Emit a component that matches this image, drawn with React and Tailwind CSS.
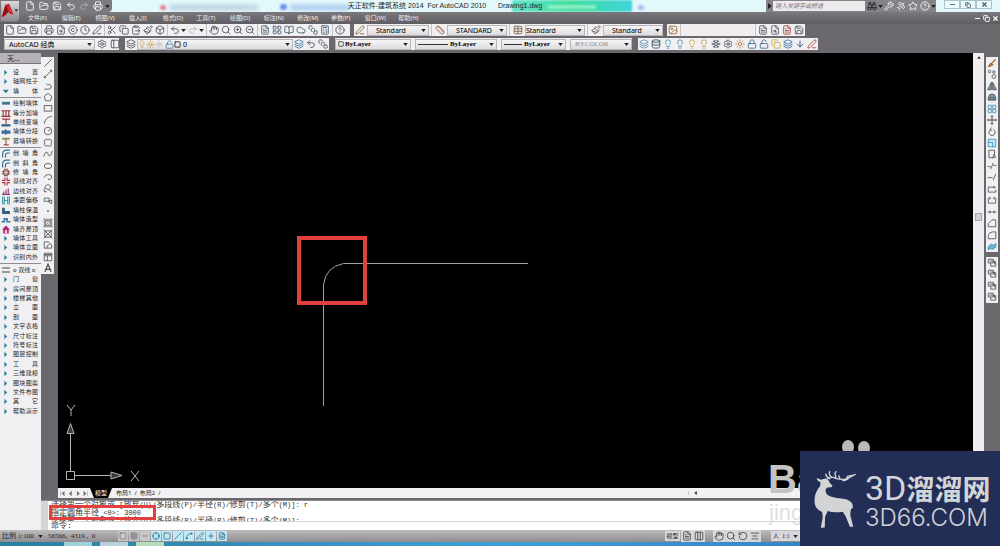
import {
  AlignCenter, ArrowDown, Binoculars, BookOpen, Box, Calculator, CircleHelp,
  ClipboardPaste, Clock, Cloud, Columns3, Copy, Crosshair, Database, File, FileSearch,
  FileText, FolderOpen, Grid3x3, Hand, Image, Layers,
  LayoutGrid, Lightbulb, Lock, LockOpen, Minus, Paintbrush, PanelLeft, PenLine,
  Plus, Printer, Redo2, RotateCcw, Satellite, Save, Scissors, Search, Settings, Slash, Snowflake,
  Spline, SquareStack, Star, Sun, Table, Undo2, Wrench, X, Square, ZoomIn, ZoomOut, Ruler, Copyright,
} from "lucide-react";

const menus = [
  "文件(F)", "编辑(E)", "视图(V)", "插入(I)", "格式(O)", "工具(T)",
  "绘图(D)", "标注(N)", "修改(M)", "参数(P)", "窗口(W)", "帮助(H)",
];

const standardTools = [
  [File, FolderOpen, Save],
  [Printer, FileSearch, Copyright, Clock, PenLine],
  [Scissors, Copy, ClipboardPaste, Paintbrush, Box],
];
const zoomTools = [Hand, Search, ZoomIn, ZoomOut];
const paletteTools = [FileText, LayoutGrid, BookOpen, Cloud, SquareStack, Calculator];

const layerTools = [
  ["隔离", Layers, "text-[#5f8fae]"],
  ["取消隔离", Database, "text-[#26485c]"],
  ["冻结", Lightbulb, "text-[#3f9ac4]"],
  ["关闭图层", Lightbulb, "text-[#4c88a8]"],
  ["打开图层", Lightbulb, "text-[#d0a63c]"],
  ["全部打开", Lightbulb, "text-[#b79a5d]"],
  ["冻结图层", Snowflake, "text-[#44525c]"],
  ["全部解冻", Settings, "text-[#44525c]"],
  ["解冻", Sun, "text-[#a8743c]"],
  ["锁定", Lock, "text-[#2f6a8c]"],
  ["解锁", LockOpen, "text-[#2f6a8c]"],
  ["图层匹配", Copy, "text-[#c2ac35]"],
  ["上一图层", Layers, "text-[#2c6ba5]"],
  ["合并图层", ArrowDown, "text-[#234b7a]"],
  ["删除图层", PenLine, "text-[#a3463c]"],
];

const wallTools = [
  ["绘制墙体", "wall"], ["等分加墙", "split"], ["单线变墙", "convert"],
  ["墙体分段", "segment"], ["幕墙转换", "curtain"],
];
const wallEdits = [
  ["倒墙角", "fillet"], ["倒斜角", "fillet"], ["修墙角", "cross"], ["基线对齐", "align"],
  ["边线对齐", "edge"], ["净距偏移", "offset"], ["墙柱保温", "column"], ["墙体造型", "shape"],
  ["墙齐屋顶", "roof"], ["墙体工具", "arrow"], ["墙体立面", "arrow"], ["识别内外", "arrow"],
];
const categories = [
  "门窗", "房间屋顶", "楼梯其他", "立面", "剖面", "文字表格", "尺寸标注", "符号标注",
  "图层控制", "工具", "三维建模", "图块图案", "文件布图", "其它", "帮助演示",
];

const glyphs = {
  arrow: <path d="M5 3l5 5-5 5z" fill="#2a7f9e" />,
  down: <path d="M2 5h11l-5 6z" fill="#2a7f9e" />,
  wall: <path d="M1 5h14v5H1z" fill="#3f7396" />,
  split: <path d="M0 3h16M0 13h16M3 3v10M8 3v10M13 3v10" stroke="#8d3038" strokeWidth="2" />,
  convert: (
    <>
      <path d="M1 2h14M8 2v8" stroke="#a53038" strokeWidth="2" />
      <path d="M0 11h16v4H0z" fill="#30607f" />
    </>
  ),
  segment: <path d="M0 6h6V3l4 3h6v6h-6l-4 2v-2H0z" fill="#376f98" />,
  curtain: (
    <>
      <path d="M1 3h14" stroke="#8c8a48" strokeWidth="3" />
      <path d="M8 4v9M4 14h9" stroke="#a8493f" strokeWidth="2" />
    </>
  ),
  fillet: <path d="M2 15V9q0-7 7-7h6M7 15v-4q0-4 4-4h4" fill="none" stroke="#2f6f96" strokeWidth="2" />,
  cross: (
    <>
      <path d="M6 0v16M10 0v16M0 6h16M0 10h16" stroke="#a05a55" strokeWidth="1" />
      <circle cx="8" cy="8" r="5" fill="none" stroke="#7a4c48" strokeWidth="2" />
    </>
  ),
  align: <path d="M6 1v5H1M10 1v5h5M6 15v-5H1M10 15v-5h5" fill="none" stroke="#b0323c" strokeWidth="2" />,
  edge: <path d="M1 13h14M4 13V8M8 13V5M12 13V2" stroke="#8b3d78" strokeWidth="2" />,
  offset: <path d="M2 1v14M14 1v14M5 1v14M11 1v14M5 8h6" stroke="#3b98a7" strokeWidth="2" />,
  column: <path d="M1 3h5v6h9v5H1z" fill="#34607e" />,
  shape: <path d="M0 12h5V7h5v5h6" fill="none" stroke="#3b7da5" strokeWidth="3" />,
  roof: (
    <>
      <path d="M8 1l7 7h-2v7H3V8H1z" fill="#a82d72" />
      <path d="M6 9h4v6H6z" fill="#f0c6dc" />
    </>
  ),
};

const drawTools = [
  ["直线", <path d="M2 14L14 2" />],
  ["构造线", <path d="M2 14L14 2M2 11v3h3M11 2h3v3" />],
  ["多段线", <path d="M2 13h8q4-1 3-5t-6-2l-2-2" />],
  ["正多边形", <path d="M8 2l6 5-2 7H4L2 7z" />],
  ["矩形", <path d="M2 4h12v9H2z" />],
  ["圆弧", <path d="M2 14Q3 4 14 2" />],
  ["圆", <><circle cx="8" cy="8" r="6" /><path d="M8 8l4-3" /></>],
  ["修订云线", <path d="M3 3q2-2 5 0q3-2 5 0q2 3 0 5q1 3-1 5q-2 1-4-1q-3 2-5 0q-2-2 0-4q-2-3 0-5z" />],
  ["样条曲线", <path d="M1 12Q5 0 8 8t7-5" />],
  ["椭圆", <ellipse cx="8" cy="8" rx="6" ry="4" />],
  ["椭圆弧", <path d="M2 9q1-5 7-5q6 1 5 5q-2 4-6 3" />],
  ["插入块", <path d="M3 8q1-6 6-5l4 3-4 5-4-2zM9 10l5 5M2 9v5h4" />],
  ["创建块", <path d="M2 5h8v5H2zM8 10l6 4V8z" />],
  ["点", <circle cx="8" cy="8" r="1" />],
  ["图案填充", <path d="M4 4h8v8H4zM4 8l4-4M4 12l8-8M8 12l4-4M2 1v14M14 1v14M1 2h14M1 14h14" strokeWidth="1" />],
  ["渐变色", <path d="M3 3h10v10H3zM1 1l14 14M15 1L1 15" />],
  ["面域", <path d="M2 13V3h7l5 5v5zM6 13q0-6 5-6" />],
  ["表格", <path d="M2 2h12v12H2zM2 6h12M7 6v8M2 4h12" />],
  ["多行文字", <path d="M3 14L8 2l5 12M5 10h6" strokeWidth="2" />],
];

const modifyTools = [
  ["删除", <path d="M2 14l4-5 3 2zM7 9l7-7" stroke="#a5632c" strokeWidth="2" />],
  ["复制", <><circle cx="4" cy="4" r="2" /><circle cx="11" cy="5" r="2" /><circle cx="11" cy="12" r="3" /></>],
  ["镜像", <path d="M7 2v12H1zM9 2v12h6z" fill="#7e9aad" />],
  ["偏移", <path d="M2 13V9q1-6 6-6t6 6v4zM5 13V9h6v4" fill="#7e9aad" />],
  ["阵列", <path d="M2 2h5v5H2zM9 2h5v5H9zM2 9h5v5H2zM9 9h5v5H9z" stroke="#3e8fb5" />],
  ["移动", <path d="M8 1v14M1 8h14M6 3l2-2 2 2M6 13l2 2 2-2M3 6L1 8l2 2M13 6l2 2-2 2" stroke="#333" />],
  ["旋转", <path d="M10 4a5 5 0 1 1-4 0M7 1L5 4l3 2" stroke="#444" />],
  ["缩放", <path d="M2 2h12v12H2zM2 7h7v7" fill="#c9ecf7" stroke="#2c91b9" />],
  ["拉伸", <path d="M3 2h9v8M3 2v12h7M9 14l5-1-3-4z" />],
  ["修剪", <path d="M1 9h5M10 7h5M6 13l4-10" />],
  ["延伸", <path d="M1 9h8M10 13l4-10" />],
  ["打断于点", <path d="M14 5H2v8h12V9M11 3v4" />],
  ["打断", <path d="M5 5H2v8h12V5h-3M5 3v4M11 3v4" />],
  ["合并", <path d="M1 8h5M15 8h-5M4 6l3 2-3 2M12 6L9 8l3 2" />],
  ["倒角", <path d="M2 14V9l6-6h6v11z" />],
  ["圆角", <path d="M2 14V9q1-6 7-6h5v11z" />],
  ["分解", <path d="M2 9l5-4 3 2 4-3v6l-5 3-3-1-4 2z" fill="#6fb7d6" stroke="#2982aa" />],
];
const orderTools = ["前置", "后置", "置于对象之上", "置于对象之下"];

const statusModes = [
  ["捕捉", Square, false], ["栅格", Grid3x3, false], ["正交", Minus, false],
  ["极轴", Crosshair, true], ["对象捕捉", Square, true], ["对象追踪", Slash, true],
  ["动态UCS", Spline, true], ["动态输入", PenLine, true], ["线宽", Plus, true],
  ["快捷特性", FileText, true],
];

function Tool({ icon: Icon, label, className = "text-[#4b5157]" }) {
  return (
    <button type="button" aria-label={label} className={`flex h-3 w-3 shrink-0 items-center justify-center ${className}`}>
      <Icon size={10} strokeWidth={2} />
    </button>
  );
}

function Sep() {
  return <div className="flex h-3 w-[3px] shrink-0 justify-center"><div className="w-px bg-[#c6c3c7]" /></div>;
}

function Caret({ className = "" }) {
  return (
    <svg viewBox="0 0 6 4" className={`h-[3px] w-[5px] shrink-0 ${className}`}>
      <path d="M0 0h6L3 4z" fill="#222" />
    </svg>
  );
}

function Picker({ label, value, width, className = "", children }) {
  return (
    <div className={`relative flex h-[11px] shrink-0 items-center border border-[#b9b6ba] bg-linear-to-b from-[#f7f6f7] to-[#dddbde] ${width}`}>
      {children}
      <select aria-label={label} className={`h-full min-w-0 flex-1 appearance-none bg-transparent leading-[9px] ${className}`}>
        <option>{value}</option>
      </select>
      <Caret className="pointer-events-none absolute right-[2px]" />
    </div>
  );
}

function Glyph({ name }) {
  return <svg viewBox="0 0 16 16" className="h-[9px] w-[10px] shrink-0">{glyphs[name]}</svg>;
}

function PaletteItem({ text, glyph = "arrow" }) {
  return (
    <li className="flex min-h-0 flex-1">
      <button type="button" aria-label={text} className="flex flex-1 items-center gap-[2px] pl-px pr-[3px]">
        <Glyph name={glyph} />
        <span className="flex flex-1 justify-between leading-[9px]">
          {text.split("").map((ch, i) => <span key={i}>{ch}</span>)}
        </span>
      </button>
    </li>
  );
}

function Header() {
  return (
    <header className="flex h-6 shrink-0 bg-linear-to-b from-[#979598] to-[#5f5d61]">
      <button type="button" aria-label="应用程序菜单" className="flex h-[22px] w-5 shrink-0 items-center rounded-br-sm border border-[#77757a] bg-linear-to-b from-[#dcdadd] to-[#8e8c90]">
        <svg viewBox="0 0 20 22" className="h-5 w-5">
          <path d="M1 18L5 4l4-1 5 12-4-1-2-2-3 4z" fill="#c71f25" />
          <path d="M5 4l3 8-7 6z" fill="#8c1016" />
          <path d="M7 5l3 6 3 3z" fill="#f1666a" />
          <path d="M15 9h4l-2 3z" fill="#333" />
        </svg>
      </button>
      <div className="flex min-w-0 flex-1 flex-col">
        <div className="flex h-3 bg-[#e3f8fb]">
          <div className="flex w-[92px] shrink-0 items-center justify-between rounded-br-sm bg-[#7c7a7e] pl-1 pr-[2px] text-white">
            <Tool icon={File} label="新建" className="text-white" />
            <Tool icon={FolderOpen} label="打开" className="text-white" />
            <Tool icon={Save} label="保存" className="text-white" />
            <Tool icon={Undo2} label="放弃" className="text-white" />
            <Tool icon={Redo2} label="重做" className="text-[#b5b3b7]" />
            <Tool icon={Printer} label="打印" className="text-white" />
            <Caret />
          </div>
          <div className="relative flex min-w-0 flex-1 items-center justify-center overflow-hidden pl-3">
            <div className="absolute left-[48px] top-[5px] h-[5px] w-[6px] rounded-full bg-[#e87f95] blur-[1px]" />
            <div className="absolute left-[58px] top-[5px] h-[5px] w-[88px] bg-[#b9cfdf] blur-[2px]" />
            <div className="absolute left-[168px] top-[4px] h-[6px] w-[7px] rounded-full bg-[#6f8df0] blur-[1px]" />
            <div className="absolute left-[178px] top-[5px] h-[5px] w-[60px] bg-[#a9c5f2] blur-[2px]" />
            <div className="absolute left-[400px] top-0 h-3 w-[120px] bg-linear-to-r from-[#5fe3cf] via-[#3fdc9b] to-[#41d4dc] blur-[1px]" />
            <div className="absolute left-[436px] top-[5px] h-[4px] w-[48px] bg-[#8cf0c4] blur-[1px]" />
            <div className="absolute left-[526px] top-[5px] h-[5px] w-[6px] rounded-full bg-[#a8bdf0] blur-[1px]" />
            <h1 className="relative whitespace-pre text-[7px] leading-3 text-[#1c2529] font-['Liberation_Sans','Noto_Sans_CJK_SC',sans-serif]">
              天正软件-建筑系统 2014  For AutoCAD 2010      Drawing1.dwg
            </h1>
          </div>
          <form className="flex w-[170px] shrink-0 items-center bg-[#858387] pl-[2px]">
            <svg viewBox="0 0 4 6" className="h-[6px] w-[4px]"><path d="M0 0l4 3-4 3z" fill="#222" /></svg>
            <input aria-label="搜索" placeholder="键入关键字或短语" className="mx-px h-[10px] w-[94px] bg-[#eceaed] px-[2px] text-[6px] italic leading-[10px] placeholder:text-[#77757a]" />
            <Tool icon={Binoculars} label="查找" className="text-[#222]" />
            <Caret />
            <Tool icon={Wrench} label="速博应用中心" className="text-white" />
            <Tool icon={Satellite} label="通讯中心" className="text-white" />
            <Tool icon={Star} label="收藏夹" className="text-white" />
            <Tool icon={CircleHelp} label="帮助" className="text-white" />
            <Caret />
          </form>
          <div className="flex h-[9px] w-16 shrink-0 justify-center text-[#555] *:flex *:w-4 *:items-center *:justify-center *:border *:border-[#a9c3cf] *:bg-[#eafafd]">
            <button type="button" aria-label="最小化"><Minus size={7} strokeWidth={3} /></button>
            <button type="button" aria-label="还原"><Copy size={6} strokeWidth={3} /></button>
            <button type="button" aria-label="关闭"><X size={7} strokeWidth={4} /></button>
          </div>
        </div>
        <nav className="flex h-3 items-center justify-between">
          <ul className="ml-2 grid w-[404px] grid-cols-12 text-[6px] leading-3 text-[#efedf0]">
            {menus.map((m) => (
              <li key={m}><button type="button" className="block">{m}</button></li>
            ))}
          </ul>
          <div className="flex gap-[2px] pr-px text-white">
            <button type="button" aria-label="最小化图形"><Minus size={7} strokeWidth={4} /></button>
            <button type="button" aria-label="还原图形"><Copy size={7} strokeWidth={3} /></button>
            <button type="button" aria-label="关闭图形"><X size={7} strokeWidth={4} /></button>
          </div>
        </nav>
      </div>
    </header>
  );
}

function Toolbars() {
  return (
    <div className="flex shrink-0 flex-col gap-[2px] pb-[3px] pl-1">
      <div className="flex h-3 gap-[4px]">
        <div className="flex w-[346px] shrink-0 bg-[#f1eff1]">
          {standardTools.map((group, g) => (
            <div key={g} className="flex">
              {group.map((icon, i) => <Tool key={i} icon={icon} label={`标准 ${g}-${i}`} />)}
              <Sep />
            </div>
          ))}
          <Tool icon={Undo2} label="放弃" />
          <div className="flex w-[6px] items-center"><Caret /></div>
          <Tool icon={Redo2} label="重做" className="text-[#b5b3b7]" />
          <div className="flex w-[6px] items-center"><Caret /></div>
          <Sep />
          {zoomTools.map((icon, i) => <Tool key={i} icon={icon} label={`缩放 ${i}`} />)}
          <Sep />
          {paletteTools.map((icon, i) => <Tool key={i} icon={icon} label={`选项板 ${i}`} className="text-[#3f5c70]" />)}
          <Sep />
          <Tool icon={CircleHelp} label="帮助" />
        </div>
        <div className="flex shrink-0 items-center gap-px bg-[#f1eff1] text-[7px]">
          <Tool icon={PenLine} label="文字样式" className="text-[#8a5a30]" />
          <Picker label="文字样式" value="Standard" width="w-[62px]" className="pl-2" />
          <Sep />
          <Tool icon={Ruler} label="标注样式" className="text-[#8a4a38]" />
          <Picker label="标注样式" value="STANDARD" width="w-[60px]" className="pl-2" />
          <Sep />
          <Tool icon={Table} label="表格样式" className="text-[#7a5c3c]" />
          <Picker label="表格样式" value="Standard" width="w-[60px]" />
          <Sep />
          <Tool icon={Paintbrush} label="多重引线样式" className="text-[#6b5a4c]" />
          <Picker label="多重引线样式" value="Standard" width="w-[60px]" className="pl-2" />
        </div>
        <div className="flex shrink-0 items-center bg-[#f1eff1]">
          <Tool icon={Image} label="参照" className="text-[#a0683c]" />
          <Sep />
          <input aria-label="参照名称" className="h-[10px] w-[72px] bg-[#f3ecee]" />
          <Sep />
          <Tool icon={FileText} label="添加到工作集" />
          <Tool icon={FileSearch} label="从工作集删除" />
          <Tool icon={FileText} label="关闭参照" className="text-[#9a4138]" />
          <Tool icon={Save} label="保存参照编辑" />
        </div>
      </div>

      <div className="flex h-3 gap-[6px]">
        <div className="flex w-[115px] shrink-0 items-center gap-px bg-[#f1eff1] text-[7px]">
          <Picker label="工作空间" value="AutoCAD 经典" width="w-[91px]" className="pl-1" />
          <Tool icon={Settings} label="工作空间设置" />
          <Tool icon={PanelLeft} label="我的工作空间" />
        </div>
        <div className="flex w-[204px] shrink-0 items-center bg-[#f1eff1] text-[7px]">
          <Tool icon={Layers} label="图层特性" />
          <Picker label="图层" value="0" width="w-[156px]" className="pl-[2px]">
            <Lightbulb size={8} className="text-[#c79a2a]" />
            <Sun size={9} className="text-[#c79a2a]" />
            <Sun size={8} className="text-[#b9b29c]" />
            <LockOpen size={9} className="ml-[2px] text-[#3b7ea5]" />
            <Square size={7} className="text-[#222]" strokeWidth={3} />
          </Picker>
          <Tool icon={Layers} label="置为当前" className="text-[#39769c]" />
          <Tool icon={Undo2} label="上一个图层" />
          <Tool icon={SquareStack} label="图层状态管理器" />
        </div>
        <div className="flex shrink-0 items-center gap-[4px] bg-[#f1eff1] font-['Liberation_Serif',serif] text-[7px] font-bold">
          <Picker label="颜色" value="ByLayer" width="w-[76px]" className="pl-px">
            <Square size={6} strokeWidth={3} className="ml-[2px] text-[#333]" />
          </Picker>
          <Picker label="线型" value="ByLayer" width="w-[82px]" className="pl-[2px]">
            <span className="ml-[2px] h-px w-[30px] bg-[#333]" />
          </Picker>
          <Picker label="线宽" value="ByLayer" width="w-[65px]" className="pl-[2px]">
            <span className="ml-[2px] h-px w-[18px] bg-[#333]" />
          </Picker>
          <Picker label="打印样式" value="BYCOLOR" width="w-[62px]" className="pl-1 font-normal text-[#8b898d]" />
        </div>
        <div className="flex shrink-0 bg-[#f1eff1]">
          {layerTools.map(([label, icon, color]) => <Tool key={label} icon={icon} label={label} className={color} />)}
        </div>
      </div>
    </div>
  );
}

function ScreenMenu() {
  return (
    <aside className="flex w-[41px] shrink-0 flex-col bg-[#f0eff1] text-[6px] text-[#26282b]">
      <div className="h-[11px] shrink-0 border-b border-[#77757a] bg-[#b4b2b6] pl-[7px] text-[7px] leading-[11px]">天...</div>
      <ul className="mt-1 flex h-[28px] shrink-0 flex-col">
        <PaletteItem text="设置" />
        <PaletteItem text="轴网柱子" />
        <PaletteItem text="墙体" glyph="down" />
      </ul>
      <hr className="my-px border-[#8f8d91]" />
      <ul className="flex h-[47px] shrink-0 flex-col">
        {wallTools.map(([text, glyph]) => <PaletteItem key={text} text={text} glyph={glyph} />)}
      </ul>
      <hr className="my-px border-[#8f8d91]" />
      <ul className="flex h-[113px] shrink-0 flex-col">
        {wallEdits.map(([text, glyph]) => <PaletteItem key={text} text={text} glyph={glyph} />)}
      </ul>
      <hr className="my-px border-[#8f8d91]" />
      <div className="flex h-[10px] shrink-0 items-center pl-[2px] leading-[10px]">
        <svg viewBox="0 0 8 6" className="mr-[3px] h-[6px] w-2"><path d="M0 1h8M0 5h8" stroke="#444" /></svg>
        <button type="button" className="whitespace-pre">o 双线 o</button>
      </div>
      <ul className="flex h-[141px] shrink-0 flex-col">
        {categories.map((text) => <PaletteItem key={text} text={text} />)}
      </ul>
    </aside>
  );
}

function StrokeButton({ label, children }) {
  return (
    <button type="button" aria-label={label} className="flex min-h-0 flex-1 items-center justify-center">
      <svg viewBox="0 0 16 16" className="h-[10px] w-[10px]" fill="none" stroke="#4a4e53" strokeWidth="1.3">{children}</svg>
    </button>
  );
}

function Canvas() {
  return (
    <div className="relative min-h-0 flex-1 overflow-hidden bg-black">
      <svg className="absolute left-0 top-0 h-[360px] w-[480px]" fill="none">
        <path d="M265.5 353V232q2-18 20-21.500H470" stroke="#a0a0a0" />
        <rect x="241" y="185" width="66" height="65" stroke="#e0413f" strokeWidth="4" />
      </svg>
      <svg viewBox="0 0 90 90" className="absolute bottom-0 left-0 h-[90px] w-[90px]" fill="none" stroke="#b5b5b5">
        <path d="M8.500 73.500h8v8h-8zM12.500 73V36M17 77.500h36" />
        <path d="M12.500 25.500l3.500 10h-7zM64 77.500l-11-3.500v7z" fill="#3a3a3a" />
        <path d="M9 7l4 5 4-5M13 12v6M73 73l8 10M81 73l-8 10" />
      </svg>
    </div>
  );
}

function LayoutTabs() {
  return (
    <div className="flex h-[10px] shrink-0 items-center bg-[#f2f0f2] text-[6px] leading-[10px] text-[#222]">
      <div className="flex w-[32px] justify-around text-[#555]">
        {["M2 0v6M7 0L4 3l3 3z", "M6 0L3 3l3 3z", "M3 0l3 3-3 3z", "M6 0v6M1 0l3 3-3 3z"].map((d) => (
          <button key={d} type="button" aria-label="切换布局">
            <svg viewBox="0 0 8 6" className="h-[5px] w-[6px]" fill="#666" stroke="#666" strokeWidth="0.5"><path d={d} /></svg>
          </button>
        ))}
      </div>
      <button type="button" className="h-full bg-black px-[5px] text-white [clip-path:polygon(0_0,100%_0,82%_100%,18%_100%)]">模型</button>
      <button type="button" className="ml-1 whitespace-pre">布局1  /</button>
      <button type="button" className="ml-[3px] whitespace-pre">布局2  /</button>
      <div className="ml-auto w-[312px] border-l border-[#c6c4c8] pl-[5px]">
        <svg viewBox="0 0 4 6" className="h-[4px] w-[3px]"><path d="M4 0v6L0 3z" fill="#333" /></svg>
      </div>
    </div>
  );
}

// Latin cells of the console font are narrower than half of a Chinese cell
function ConsoleLine({ text }) {
  return (
    <p className="h-2 whitespace-pre">
      {text.split(/([\x20-\x7e]+)/).map((part, i) =>
        i % 2 ? <span key={i} className="text-[7px]">{part}</span> : part
      )}
    </p>
  );
}

function CommandWindow() {
  const fillet = "选择第一个对象或 [放弃(U)/多段线(P)/半径(R)/修剪(T)/多个(M)]:";
  return (
    <section className="relative mt-[2px] flex h-[30px] shrink-0 border-t border-[#8d8b8f] bg-white pl-[10px] text-[8px] leading-[8px] text-[#333] font-['Liberation_Mono','Noto_Sans_CJK_SC',monospace]">
      <div className="absolute inset-y-0 left-0 w-[7px] bg-[#d6d4d7]" />
      <div className="flex flex-1 flex-col">
        <div className="flex h-[21px] flex-col justify-end overflow-hidden border-b border-[#d4d2d5]">
          <div className="-mb-1">
            <ConsoleLine text={`${fillet} r`} />
            <ConsoleLine text="指定圆角半径 <0>: 3000" />
            <ConsoleLine text={fillet} />
          </div>
        </div>
        <label className="flex">
          命令:
          <input aria-label="命令" className="h-2 flex-1" />
        </label>
      </div>
      <div className="absolute left-[8px] top-[4px] h-[15px] w-[107px] border-[3px] border-[#e0403f]" />
    </section>
  );
}

function StatusBar() {
  return (
    <footer className="shrink-0">
      <div className="flex h-3 items-center bg-linear-to-b from-[#bdbbbe] to-[#8f8d91] text-[6px] text-[#1f1f21] font-['Liberation_Serif','Noto_Sans_CJK_SC',serif]">
        <button type="button" className="flex w-[46px] items-center gap-1 whitespace-nowrap pl-[2px] text-[7px] leading-3">比例 1:100 <Caret /></button>
        <span className="w-[70px] whitespace-pre pl-[2px] text-[7px]">56566,  4319 ,  0</span>
        <div className="ml-[2px] flex gap-px">
          {statusModes.map(([label, Icon, on]) => (
            <button key={label} type="button" aria-label={label} className={`flex h-[10px] w-[10px] items-center justify-center ${on ? "bg-[#bfe9f5] text-[#245a78]" : "bg-[#c9c7ca] text-[#6c6a6e]"}`}>
              <Icon size={8} strokeWidth={2} />
            </button>
          ))}
        </div>
        <div className="ml-auto flex w-[335px] items-center gap-px">
          <button type="button" className="h-[10px] w-[15px] bg-[#d8d6d9] font-['Noto_Sans_CJK_SC',sans-serif] leading-[10px]">模型</button>
          <div className="flex bg-[#d8d6d9]">
            <Tool icon={FileText} label="快速查看布局" className="text-[#444]" />
            <Tool icon={Columns3} label="快速查看图形" className="text-[#444]" />
          </div>
          <div className="w-[6px]" />
          <div className="flex bg-[#d8d6d9]">
            <Tool icon={Hand} label="平移" className="text-[#444]" />
            <Tool icon={Search} label="缩放" className="text-[#444]" />
            <Tool icon={RotateCcw} label="控制盘" className="text-[#444]" />
            <Tool icon={AlignCenter} label="运动显示" className="text-[#444]" />
          </div>
          <div className="w-[8px]" />
          <button type="button" className="flex h-[10px] items-center gap-[2px] whitespace-pre bg-[#d8d6d9] px-[2px] leading-[10px]">人  1:1 <Caret /></button>
        </div>
      </div>
      <div className="flex h-1 gap-2 bg-linear-to-r from-[#2b7f9f] via-[#3f9fd6] to-[#2f77b8] pl-[64px]">
        <div className="w-[28px] bg-[#9fd0dc]" />
        <div className="w-[28px] bg-[#b9cfd9]" />
        <div className="w-[28px] bg-[#b5dcb9]" />
      </div>
    </footer>
  );
}

function Watermark() {
  return (
    <div className="pointer-events-none absolute bottom-0 right-0 h-[107px] w-[232px]">
      <svg viewBox="0 0 40 20" className="absolute left-[72px] top-0 h-5 w-10">
        <ellipse cx="8" cy="8" rx="6" ry="7" fill="#b9b9b9" />
        <ellipse cx="24" cy="9" rx="6" ry="7" fill="#b9b9b9" />
      </svg>
      <p className="absolute left-0 top-[18px] text-[40px] font-bold leading-[45px] text-[#c4c4c4] font-['Liberation_Sans',sans-serif]">Ba</p>
      <p className="absolute left-px top-[62px] text-[22px] leading-6 text-[#dedede] font-['Liberation_Sans',sans-serif]">jing</p>
      <div className="absolute bottom-0 right-0 flex h-[95px] w-[200px] items-center bg-[#222e56] pl-[10px] text-[#d3d4d6]">
        <svg viewBox="0 0 168 204" className="h-[68px] w-[55px] shrink-0" fill="none" stroke="currentColor" strokeLinecap="round">
          <path stroke="none" fill="currentColor" d="M20 38l14 5 12-4 10 5 5 10 8 7-4 5-12 1-5 5q-2 12 6 18 10 6 24 8l28 4q18 4 24 16l1 11-6 4q-2 10-2 18l9 36h-10l-14-34-8-12q-28 4-46-2l-8 18-1 32-12 1 6-32-2-16Q12 132 14 104q0-22 17-42l1-11q-10-3-12-13z" />
          <path strokeWidth="4" d="M52 41q8-6 18-5 18 8 42 5l26-14M68 36q-12-6-8-18M60 40q-10-4-12-14M80 40l-4-16 4-6M92 41l-4-10M100 46q14-2 18-8M110 40l6-8 14-2" />
        </svg>
        <div className="flex flex-col gap-1 whitespace-nowrap pt-[2px]">
          <p className="flex items-center font-['Roboto',sans-serif] text-[34px] leading-8">
            3D<span className="font-['Noto_Sans_CJK_SC',sans-serif] text-[28px] font-bold leading-8">溜溜网</span>
          </p>
          <p className="font-['Inter',sans-serif] text-[24px] font-light leading-5">3D66.COM</p>
        </div>
      </div>
    </div>
  );
}

export default function App() {
  return (
    <div className="relative flex h-screen flex-col overflow-hidden bg-[#6a686c] font-['Noto_Sans','Noto_Sans_CJK_SC',sans-serif]">
      <Header />
      <Toolbars />
      <div className="flex min-h-0 flex-1">
        <ScreenMenu />
        <main className="flex min-w-0 flex-1 flex-col">
          <div className="flex min-h-0 flex-1">
            <div className="w-[17px] shrink-0 pt-1">
              <div className="flex h-[217px] w-[13px] flex-col bg-[#f1f0f2]">
                {drawTools.map(([label, shape]) => <StrokeButton key={label} label={label}>{shape}</StrokeButton>)}
              </div>
            </div>
            <div className="flex min-w-0 flex-1 flex-col">
              <div className="flex min-h-0 flex-1">
                <Canvas />
                <div className="flex w-[11px] shrink-0 flex-col items-center bg-[#f0eef0] pt-[3px]">
                  <svg viewBox="0 0 6 4" className="h-[3px] w-[4px]"><path d="M0 4h6L3 0z" fill="#333" /></svg>
                  <div className="mt-[154px] h-[8px] w-[7px] border border-[#a9a7ab] bg-[#d3d1d4]" />
                </div>
                <div className="flex w-4 shrink-0 flex-col items-center gap-[5px] pt-1">
                  <div className="flex h-[195px] w-3 flex-col bg-[#f1f0f2]">
                    {modifyTools.map(([label, shape]) => <StrokeButton key={label} label={label}>{shape}</StrokeButton>)}
                  </div>
                  <div className="flex h-[46px] w-3 flex-col bg-[#f1f0f2]">
                    {orderTools.map((label) => (
                      <StrokeButton key={label} label={label}>
                        <path d="M2 2h8v6H2zM6 8v5h8V6h-4M4 5h8v5" />
                      </StrokeButton>
                    ))}
                  </div>
                </div>
              </div>
              <LayoutTabs />
            </div>
          </div>
          <CommandWindow />
        </main>
      </div>
      <StatusBar />
      <Watermark />
    </div>
  );
}
